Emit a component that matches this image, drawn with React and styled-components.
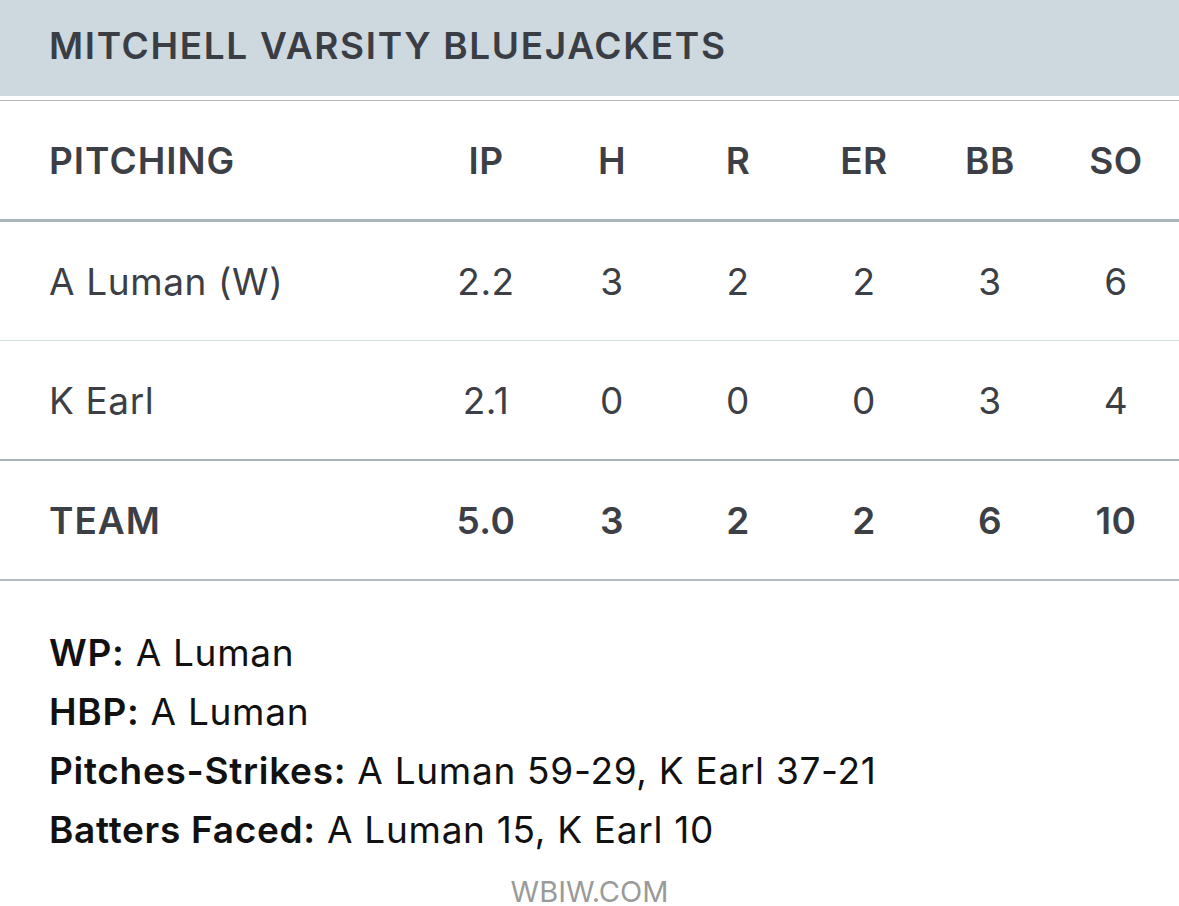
import styled, { createGlobalStyle } from 'styled-components';

const pitchers = [
  { name: 'A Luman (W)', ip: '2.2', h: 3, r: 2, er: 2, bb: 3, so: 6 },
  { name: 'K Earl', ip: '2.1', h: 0, r: 0, er: 0, bb: 3, so: 4 },
];

const team = { name: 'TEAM', ip: '5.0', h: 3, r: 2, er: 2, bb: 6, so: 10 };

const columns = ['IP', 'H', 'R', 'ER', 'BB', 'SO'];
const keys = ['ip', 'h', 'r', 'er', 'bb', 'so'];

const notes = [
  { label: 'WP:', text: 'A Luman' },
  { label: 'HBP:', text: 'A Luman' },
  { label: 'Pitches-Strikes:', text: 'A Luman 59-29, K Earl 37-21' },
  { label: 'Batters Faced:', text: 'A Luman 15, K Earl 10' },
];

export default function App() {
  return (
    <>
      <GlobalStyle />
      <Page>
        <TeamHeader>
          <h1>MITCHELL VARSITY BLUEJACKETS</h1>
        </TeamHeader>
        <Table>
          <Row $border="3px solid #a9b5b9">
            <NameCell $strong>PITCHING</NameCell>
            {columns.map((c) => (
              <StatCell key={c} $strong>{c}</StatCell>
            ))}
          </Row>
          {pitchers.map((p, i) => (
            <Row
              key={p.name}
              $border={i === pitchers.length - 1 ? '2px solid #a9b4b8' : '1px solid #d3dcdf'}
            >
              <NameCell>{p.name}</NameCell>
              {keys.map((k) => (
                <StatCell key={k}>{p[k]}</StatCell>
              ))}
            </Row>
          ))}
          <Row $border="2px solid #b3bbbf">
            <NameCell $strong>{team.name}</NameCell>
            {keys.map((k) => (
              <StatCell key={k} $strong>{team[k]}</StatCell>
            ))}
          </Row>
        </Table>
        <Notes>
          {notes.map((n) => (
            <NoteLine key={n.label}>
              <b>{n.label}</b> {n.text}
            </NoteLine>
          ))}
        </Notes>
        <Footer>WBIW.COM</Footer>
      </Page>
    </>
  );
}

const GlobalStyle = createGlobalStyle`
  body {
    margin: 0;
    background: #ffffff;
    font-family: Inter, "Liberation Sans", sans-serif;
  }
`;

const Page = styled.div`
  width: 1179px;
  display: flex;
  flex-direction: column;
`;

const TeamHeader = styled.header`
  height: 96px;
  background-color: #cdd8df;
  display: flex;
  align-items: center;
  padding-left: 49px;
  h1 {
    margin: 0 0 6px;
    font-size: 37px;
    font-weight: 600;
    color: #3a3e44;
    letter-spacing: 1.65px;
  }
`;

const Table = styled.div`
  margin-top: 4px;
  border-top: 1px solid #b9bcbd;
  display: flex;
  flex-direction: column;
`;

const Row = styled.div`
  display: grid;
  grid-template-columns: 374px repeat(6, 126px);
  padding-left: 49px;
  height: 118px;
  align-items: center;
  border-bottom: ${(p) => p.$border};
`;

const NameCell = styled.div`
  font-size: 37px;
  font-weight: ${(p) => (p.$strong ? 600 : 400)};
  letter-spacing: ${(p) => (p.$strong ? '1px' : '0.6px')};
  color: #3c4046;
`;

const StatCell = styled.div`
  text-align: center;
  font-size: 37px;
  font-weight: ${(p) => (p.$strong ? 600 : 400)};
  letter-spacing: 0.5px;
  color: #3c4046;
`;

const Notes = styled.div`
  padding: 42px 49px 0;
  display: flex;
  flex-direction: column;
`;

const NoteLine = styled.div`
  font-size: 37px;
  line-height: 59px;
  letter-spacing: 0.7px;
  color: #111;
  b {
    font-weight: 600;
  }
`;

const Footer = styled.div`
  margin-top: 18px;
  text-align: center;
  font-size: 29px;
  line-height: 30px;
  color: #9a9a9a;
`;
